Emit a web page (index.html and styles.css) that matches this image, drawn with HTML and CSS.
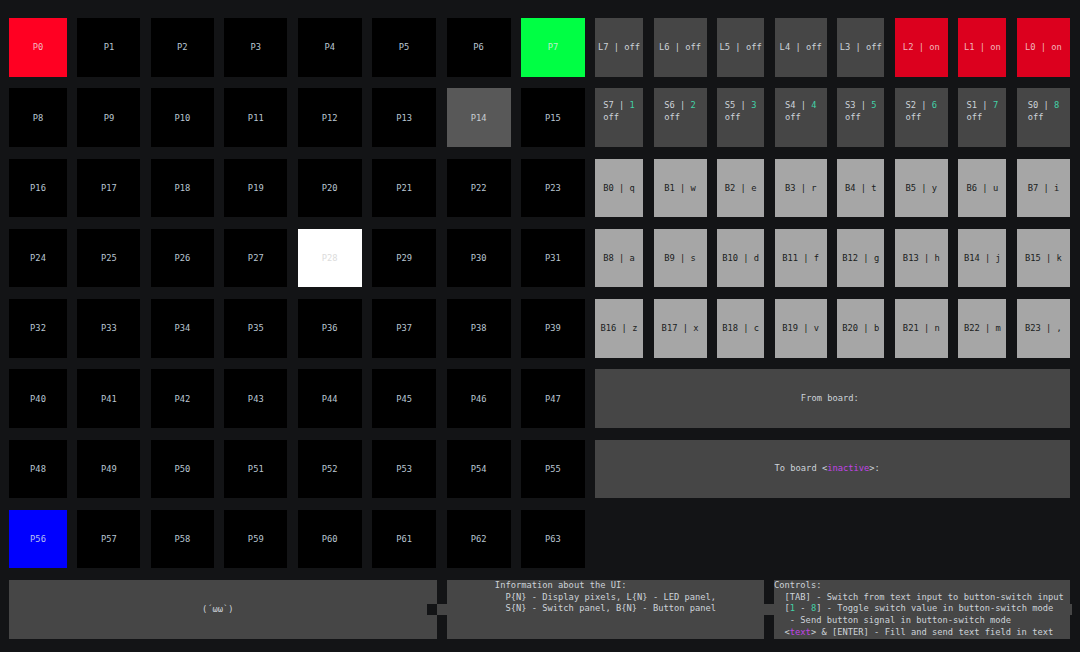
FILE: index.html
```html
<!DOCTYPE html>
<html lang="en">
<head>
<meta charset="utf-8">
<title>Board UI</title>
<link rel="stylesheet" href="styles.css">
</head>
<body>
<div class="app">
  <div class="top">
    <div class="pixels">
      <div class="px red">P0</div><div class="px">P1</div><div class="px">P2</div><div class="px">P3</div><div class="px">P4</div><div class="px">P5</div><div class="px">P6</div><div class="px green">P7</div>
      <div class="px">P8</div><div class="px">P9</div><div class="px">P10</div><div class="px">P11</div><div class="px">P12</div><div class="px">P13</div><div class="px dim">P14</div><div class="px">P15</div>
      <div class="px">P16</div><div class="px">P17</div><div class="px">P18</div><div class="px">P19</div><div class="px">P20</div><div class="px">P21</div><div class="px">P22</div><div class="px">P23</div>
      <div class="px">P24</div><div class="px">P25</div><div class="px">P26</div><div class="px">P27</div><div class="px white">P28</div><div class="px">P29</div><div class="px">P30</div><div class="px">P31</div>
      <div class="px">P32</div><div class="px">P33</div><div class="px">P34</div><div class="px">P35</div><div class="px">P36</div><div class="px">P37</div><div class="px">P38</div><div class="px">P39</div>
      <div class="px">P40</div><div class="px">P41</div><div class="px">P42</div><div class="px">P43</div><div class="px">P44</div><div class="px">P45</div><div class="px">P46</div><div class="px">P47</div>
      <div class="px">P48</div><div class="px">P49</div><div class="px">P50</div><div class="px">P51</div><div class="px">P52</div><div class="px">P53</div><div class="px">P54</div><div class="px">P55</div>
      <div class="px blue">P56</div><div class="px">P57</div><div class="px">P58</div><div class="px">P59</div><div class="px">P60</div><div class="px">P61</div><div class="px">P62</div><div class="px">P63</div>
    </div>
    <div class="side">
      <div class="led">L7 | off</div><div class="led">L6 | off</div><div class="led">L5 | off</div><div class="led">L4 | off</div><div class="led">L3 | off</div><div class="led on">L2 | on</div><div class="led on">L1 | on</div><div class="led on">L0 | on</div>
      <div class="sw"><div class="swtext"><div>S7 | <span class="num">1</span></div><div>off</div></div></div>
      <div class="sw"><div class="swtext"><div>S6 | <span class="num">2</span></div><div>off</div></div></div>
      <div class="sw"><div class="swtext"><div>S5 | <span class="num">3</span></div><div>off</div></div></div>
      <div class="sw"><div class="swtext"><div>S4 | <span class="num">4</span></div><div>off</div></div></div>
      <div class="sw"><div class="swtext"><div>S3 | <span class="num">5</span></div><div>off</div></div></div>
      <div class="sw"><div class="swtext"><div>S2 | <span class="num">6</span></div><div>off</div></div></div>
      <div class="sw"><div class="swtext"><div>S1 | <span class="num">7</span></div><div>off</div></div></div>
      <div class="sw"><div class="swtext"><div>S0 | <span class="num">8</span></div><div>off</div></div></div>
      <div class="btn">B0 | q</div><div class="btn">B1 | w</div><div class="btn">B2 | e</div><div class="btn">B3 | r</div><div class="btn">B4 | t</div><div class="btn">B5 | y</div><div class="btn">B6 | u</div><div class="btn">B7 | i</div>
      <div class="btn">B8 | a</div><div class="btn">B9 | s</div><div class="btn">B10 | d</div><div class="btn">B11 | f</div><div class="btn">B12 | g</div><div class="btn">B13 | h</div><div class="btn">B14 | j</div><div class="btn">B15 | k</div>
      <div class="btn">B16 | z</div><div class="btn">B17 | x</div><div class="btn">B18 | c</div><div class="btn">B19 | v</div><div class="btn">B20 | b</div><div class="btn">B21 | n</div><div class="btn">B22 | m</div><div class="btn">B23 | ,</div>
      <div class="wide">From board: </div>
      <div class="wide">To board &lt;<span class="mag">inactive</span>&gt;:  </div>
    </div>
  </div>
  <div class="bottom">
    <div class="panel p1"><span class="kao">(´ωω`)  </span></div>
    <div class="panel p2">
      <div class="info">
        <div class="line">Information about the UI:</div>
        <div class="line">  P{N} - Display pixels, L{N} - LED panel,</div>
        <div class="line">  S{N} - Switch panel, B{N} - Button panel</div>
      </div>
    </div>
    <div class="panel p3">
      <div class="controls">
        <div class="line">Controls:</div>
        <div class="line">  [TAB] - Switch from text input to button-switch input</div>
        <div class="line">  [<span class="num">1</span> - <span class="num">8</span>] - Toggle switch value in button-switch mode</div>
        <div class="line">   - Send button signal in button-switch mode</div>
        <div class="line">  &lt;<span class="mag">text</span>&gt; &amp; [ENTER] - Fill and send text field in text</div>
      </div>
    </div>
  </div>
</div>
</body>
</html>
```

FILE: styles.css
```css
html, body {
  margin: 0;
  padding: 0;
}

body {
  background: #131416;
  width: 1080px;
  height: 652px;
  overflow: hidden;
  font-family: "DejaVu Sans Mono", monospace;
  font-size: 8.75px;
  line-height: 11.64px;
  color: #cdd3d9;
}

.app {
  padding: 18px 10px 0 9px;
  display: flex;
  flex-direction: column;
  gap: 11.75px;
}

.top {
  display: flex;
  gap: 10px;
  height: 550.25px;
}

.pixels {
  width: 576px;
  display: grid;
  grid-template-columns: 58px 63px 63px 63px 64px 64px 64px 64px;
  grid-template-rows: repeat(8, 58.5px);
  column-gap: 10.43px;
  row-gap: 11.75px;
}

.px {
  background: #000;
  color: #b9c6d2;
  display: flex;
  align-items: center;
  justify-content: center;
  white-space: pre;
  padding-top: 2px;
}

.px.red { background: #ff0022; color: #f4b8c0; }
.px.green { background: #00ff44; color: #b8f0c8; }
.px.dim { background: #585858; color: #c8cdd2; }
.px.white { background: #ffffff; color: #dcdcdc; }
.px.blue { background: #0000ff; color: #b8c0f0; }

.side {
  width: 475px;
  display: grid;
  grid-template-columns: 48px 53px 47px 52px 47px 53px 48px 53px;
  grid-template-rows: repeat(7, 58.5px);
  column-gap: 10.57px;
  row-gap: 11.75px;
}

.led {
  background: #464646;
  display: flex;
  align-items: center;
  justify-content: center;
  white-space: pre;
  padding-top: 2px;
}

.led.on { background: #dc001e; color: #f2b4bc; }

.sw {
  background: #464646;
  display: flex;
  justify-content: center;
  align-items: flex-start;
  padding-top: 12px;
}

.swtext {
  white-space: pre;
  text-align: left;
}

.num { color: #43d1a7; }
.mag { color: #c043e6; }

.btn {
  background: #a6a6a6;
  color: #1a1d21;
  display: flex;
  align-items: center;
  justify-content: center;
  white-space: pre;
  padding-top: 2px;
}

.wide {
  grid-column: 1 / -1;
  background: #464646;
  display: flex;
  align-items: center;
  justify-content: center;
  white-space: pre;
}

.bottom {
  display: flex;
  gap: 10px;
  height: 59px;
}

.panel {
  background: #464646;
  position: relative;
}

.p1 {
  width: 428px;
  display: flex;
  align-items: center;
  justify-content: center;
  padding-top: 1px;
  box-sizing: border-box;
}

.p1::after {
  content: "";
  position: absolute;
  right: 0;
  top: 24px;
  width: 10px;
  height: 11px;
  background: #131416;
}

.p2 {
  width: 317px;
  display: flex;
  justify-content: center;
  align-items: flex-start;
}

.p2::before,
.p2::after {
  content: "";
  position: absolute;
  top: 24px;
  width: 10px;
  height: 11px;
  background: #464646;
}

.p2::before { left: -10px; }
.p2::after { right: -10px; }

.p3 {
  width: 296px;
}

.p3::after {
  content: "";
  position: absolute;
  right: -2px;
  top: 24px;
  width: 2px;
  height: 11px;
  background: #464646;
}

.info,
.controls {
  margin-top: 0;
}

.line {
  white-space: pre;
  height: 11.64px;
}

.kao {
  white-space: pre;
}
```
